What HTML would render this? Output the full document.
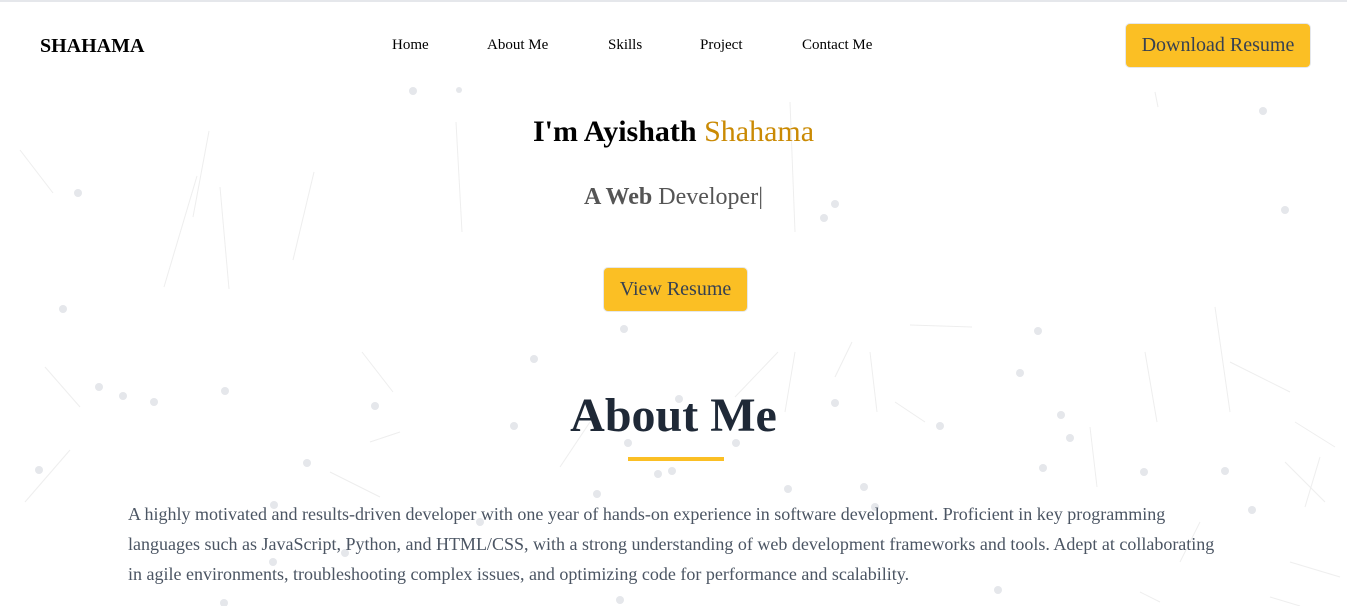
<!DOCTYPE html>
<html><head><meta charset="utf-8"><style>
*{margin:0;padding:0;box-sizing:border-box}
body{width:1347px;height:604px;overflow:hidden;background:#fff;font-family:"Liberation Serif",serif;position:relative;border-top:2px solid #e5e7eb}
svg.bg{position:absolute;left:0;top:0}
.logo{position:absolute;left:40px;top:33px;font-weight:bold;font-size:20px;color:#000}
nav{position:absolute;top:35px;font-size:15px;color:#000}
nav span{position:absolute;white-space:nowrap}
.btn{position:absolute;background:#fbbf24;border:1px solid #e5e7eb;border-radius:5px;color:#374151;display:flex;align-items:center;justify-content:center;white-space:nowrap}
.c{position:absolute;left:0;width:1347px;text-align:center}
</style></head><body>
<svg class="bg" width="1347" height="604" fill="#e5e7eb" stroke="#eee" stroke-width="1">
<g>
<line x1="20" y1="148" x2="53" y2="191"/><line x1="209" y1="129" x2="193" y2="215"/><line x1="197" y1="174" x2="164" y2="285"/><line x1="220" y1="185" x2="229" y2="287"/><line x1="314" y1="170" x2="293" y2="258"/><line x1="456" y1="120" x2="462" y2="230"/>
<line x1="45" y1="365" x2="80" y2="405"/><line x1="362" y1="350" x2="393" y2="390"/><line x1="25" y1="500" x2="70" y2="448"/><line x1="370" y1="440" x2="400" y2="430"/>
<line x1="1155" y1="90" x2="1158" y2="105"/><line x1="790" y1="100" x2="795" y2="230"/><line x1="910" y1="323" x2="972" y2="325"/><line x1="1215" y1="305" x2="1230" y2="410"/><line x1="1230" y1="360" x2="1290" y2="390"/><line x1="1145" y1="350" x2="1157" y2="420"/><line x1="1295" y1="420" x2="1335" y2="445"/><line x1="1285" y1="460" x2="1325" y2="500"/><line x1="1320" y1="455" x2="1305" y2="505"/><line x1="1090" y1="425" x2="1097" y2="485"/><line x1="895" y1="400" x2="925" y2="420"/><line x1="870" y1="350" x2="877" y2="410"/><line x1="835" y1="375" x2="852" y2="340"/><line x1="735" y1="395" x2="778" y2="350"/><line x1="795" y1="350" x2="785" y2="410"/><line x1="560" y1="465" x2="590" y2="420"/><line x1="330" y1="470" x2="380" y2="495"/><line x1="1180" y1="560" x2="1200" y2="520"/><line x1="1140" y1="590" x2="1160" y2="600"/><line x1="1290" y1="560" x2="1340" y2="575"/><line x1="1270" y1="595" x2="1300" y2="604"/>
</g>
<g stroke="none">
<circle cx="413" cy="89" r="4"/><circle cx="459" cy="88" r="3"/><circle cx="78" cy="191" r="4"/><circle cx="63" cy="307" r="4"/><circle cx="835" cy="202" r="4"/><circle cx="824" cy="216" r="4"/><circle cx="1263" cy="109" r="4"/><circle cx="1285" cy="208" r="4"/><circle cx="624" cy="327" r="4"/><circle cx="534" cy="357" r="4"/><circle cx="1038" cy="329" r="4"/><circle cx="1020" cy="371" r="4"/><circle cx="99" cy="385" r="4"/><circle cx="123" cy="394" r="4"/><circle cx="154" cy="400" r="4"/><circle cx="225" cy="389" r="4"/><circle cx="375" cy="404" r="4"/><circle cx="514" cy="424" r="4"/><circle cx="679" cy="397" r="4"/><circle cx="835" cy="401" r="4"/><circle cx="940" cy="424" r="4"/><circle cx="1061" cy="413" r="4"/><circle cx="1070" cy="436" r="4"/><circle cx="736" cy="441" r="4"/><circle cx="628" cy="441" r="4"/><circle cx="658" cy="472" r="4"/><circle cx="672" cy="469" r="4"/><circle cx="39" cy="468" r="4"/><circle cx="307" cy="461" r="4"/><circle cx="864" cy="485" r="4"/><circle cx="1043" cy="466" r="4"/><circle cx="1144" cy="470" r="4"/><circle cx="1225" cy="469" r="4"/><circle cx="597" cy="492" r="4"/><circle cx="788" cy="487" r="4"/><circle cx="274" cy="503" r="4"/><circle cx="480" cy="520" r="4"/><circle cx="1252" cy="508" r="4"/><circle cx="273" cy="560" r="4"/><circle cx="345" cy="551" r="4"/><circle cx="998" cy="588" r="4"/><circle cx="620" cy="598" r="4"/><circle cx="224" cy="601" r="4"/><circle cx="875" cy="505" r="4"/>
</g>
</svg>
<div class="logo">SHAHAMA</div>
<nav><span style="left:392px">Home</span><span style="left:487px">About Me</span><span style="left:608px">Skills</span><span style="left:700px">Project</span><span style="left:802px">Contact Me</span></nav>
<div class="btn" style="left:1125px;top:21px;width:186px;height:45px;font-size:20px">Download Resume</div>
<div class="c" style="top:113px;font-size:30px;font-weight:bold;color:#000">I'm Ayishath <span style="font-weight:normal;color:#ca8a04">Shahama</span></div>
<div class="c" style="top:182px;font-size:24px;color:#555"><b>A Web</b> Developer<span style="font-weight:100">|</span></div>
<div class="btn" style="left:603px;top:265px;width:145px;height:45px;font-size:20px">View Resume</div>
<div class="c" style="top:386px;font-size:48px;font-weight:bold;color:#1f2937">About Me</div>
<div style="position:absolute;left:628px;top:455px;width:96px;height:4px;background:#fbbf24"></div>
<p style="position:absolute;left:128px;top:497px;width:1095px;font-size:18px;line-height:30px;color:#4b5563">A highly motivated and results-driven developer with one year of hands-on experience in software development. Proficient in key programming languages such as JavaScript, Python, and HTML/CSS, with a strong understanding of web development frameworks and tools. Adept at collaborating in agile environments, troubleshooting complex issues, and optimizing code for performance and scalability.</p>
</body></html>
